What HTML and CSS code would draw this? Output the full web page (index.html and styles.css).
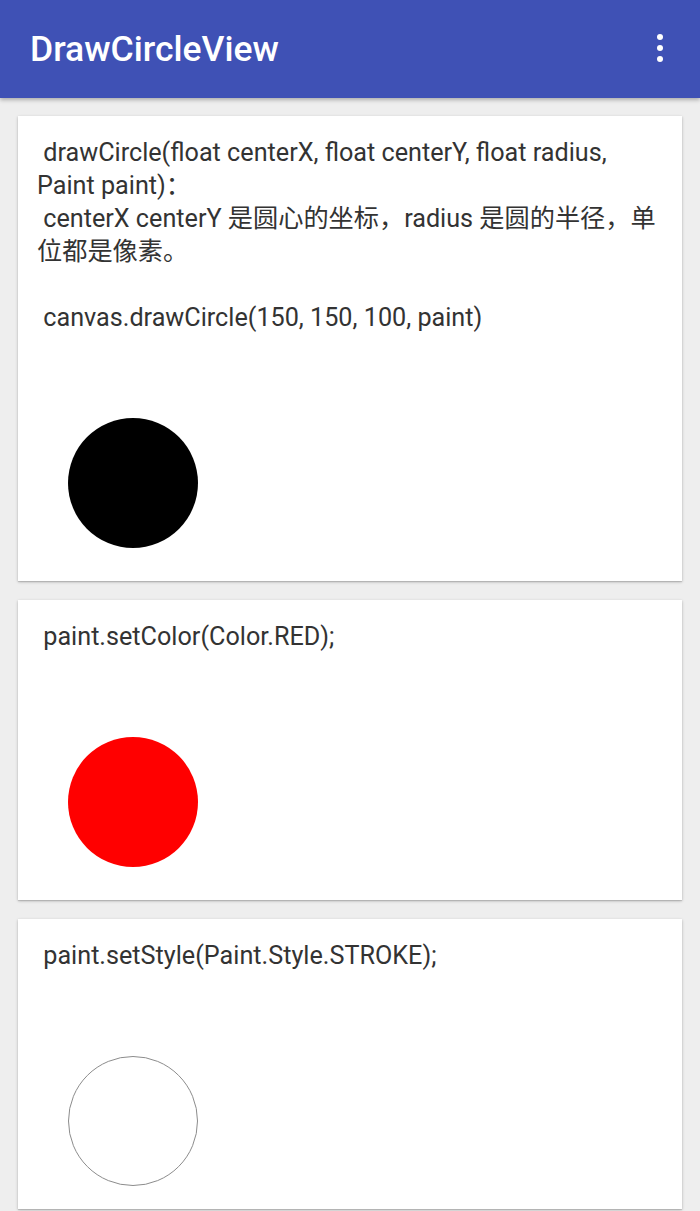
FILE: index.html
```html
<!DOCTYPE html>
<html lang="zh">
<head>
<meta charset="utf-8">
<title>DrawCircleView</title>
<link rel="stylesheet" href="styles.css">
</head>
<body>
<header class="appbar">
  <h1 class="title">DrawCircleView</h1>
  <div class="overflow" aria-label="More options">
    <span class="dot"></span><span class="dot"></span><span class="dot"></span>
  </div>
</header>
<main class="list">
  <section class="card">
    <p class="desc"> drawCircle(float centerX, float centerY, float radius, Paint paint)：
 centerX centerY 是圆心的坐标，radius 是圆的半径，单位都是像素。

 canvas.drawCircle(150, 150, 100, paint)</p>
    <div class="stage"><div class="circle fill-black"></div></div>
  </section>
  <section class="card">
    <p class="desc"> paint.setColor(Color.RED);</p>
    <div class="stage"><div class="circle fill-red"></div></div>
  </section>
  <section class="card">
    <p class="desc"> paint.setStyle(Paint.Style.STROKE);</p>
    <div class="stage stage-last"><div class="circle stroke"></div></div>
  </section>
</main>
</body>
</html>
```
FILE: styles.css
```css
html, body {
  margin: 0;
  padding: 0;
}
body {
  background: #eeeeee;
  font-family: Roboto, "Noto Sans CJK SC", sans-serif;
  width: 700px;
  height: 1211px;
  overflow: hidden;
}
.appbar {
  height: 98px;
  background: #3f51b5;
  display: flex;
  align-items: center;
  justify-content: space-between;
  padding: 0 37px 0 30px;
  box-sizing: border-box;
  box-shadow: 0 2px 4px rgba(0,0,0,0.28);
  position: relative;
  z-index: 1;
}
.title {
  margin: 0;
  color: #ffffff;
  font-size: 35.5px;
  font-weight: 500;
  letter-spacing: 0;
  line-height: 1;
  margin-top: 1px;
}
.overflow {
  display: flex;
  flex-direction: column;
  gap: 5px;
  margin-top: -2px;
}
.dot {
  width: 6px;
  height: 6px;
  border-radius: 50%;
  background: #ffffff;
}
.list {
  display: flex;
  flex-direction: column;
  gap: 19px;
  padding: 18px 18px 0 18px;
}
.card {
  background: #ffffff;
  box-shadow: 0 1px 3px rgba(0,0,0,0.22), 0 1px 1px rgba(0,0,0,0.12);
  padding: 20px 19px 0 19px;
}
.desc {
  margin: 0;
  white-space: pre-wrap;
  font-size: 25.2px;
  line-height: 33px;
  color: #333333;
}
.stage {
  padding: 84px 0 33px 31px;
}
.stage-last {
  padding-bottom: 23px;
}
.circle {
  width: 130px;
  height: 130px;
  border-radius: 50%;
  box-sizing: border-box;
}
.fill-black { background: #000000; }
.fill-red { background: #ff0000; }
.stroke { border: 1px solid #8c8c8c; }
```
